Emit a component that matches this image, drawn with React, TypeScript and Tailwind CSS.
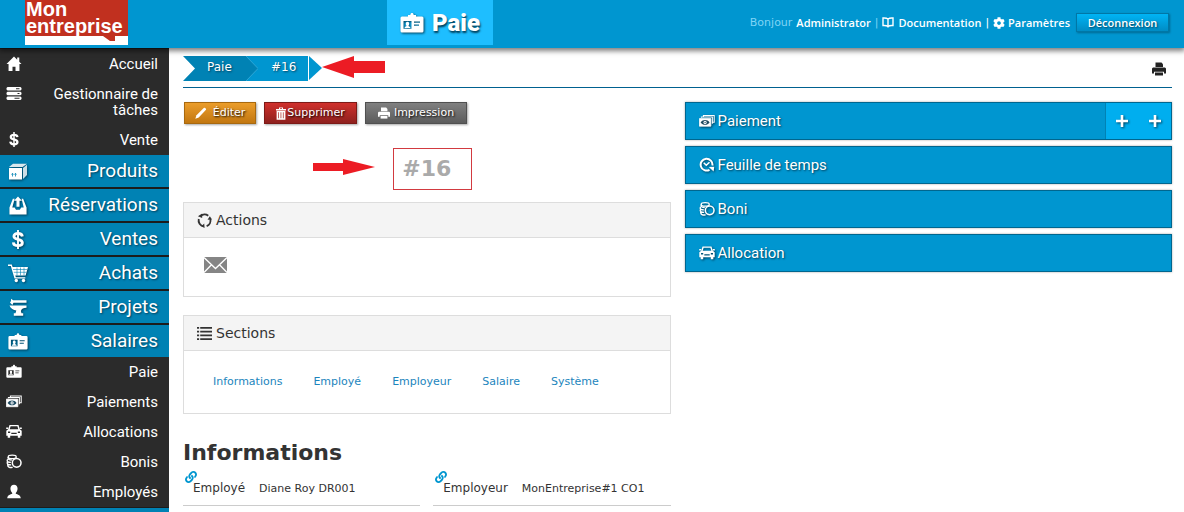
import React from 'react';
import { FaCog, FaLink } from 'react-icons/fa';

type IconProps = { className?: string };

function HomeIcon({ className }: IconProps) {
  return (
    <svg viewBox="0 0 16 16" className={className} fill="currentColor" aria-hidden="true">
      <path d="M8 0.500 0 8.600h2.200V16h4.200v-4.600h3.200V16h4.200V8.600H16l-2.400-2.500V1.500h-2.200v2.400z" />
    </svg>
  );
}

function ServerIcon({ className }: IconProps) {
  return (
    <svg viewBox="0 0 15 15" className={className} fill="currentColor" aria-hidden="true">
      <path fillRule="evenodd" d="M1 1h13l1 1v1.500l-1 1H1l-1-1V2zM9.500 2.300v1H13v-1zM1 5.700h13l1 1v1.500l-1 1H1l-1-1V6.700zM11 7v1h2V7zM1 10.400h13l1 1v1.500l-1 1H1l-1-1v-1.500zM8 11.700v1h5v-1z" />
    </svg>
  );
}

function DollarIcon({ className }: IconProps) {
  return (
    <svg viewBox="0 0 20 20" className={className} fill="none" stroke="currentColor" aria-hidden="true">
      <path d="M14.600 6.800C14.300 4.700 12.600 3.700 10 3.700c-2.700 0-4.300 1.100-4.300 2.900 0 2 1.700 2.600 4.300 3.200 2.900.7 4.600 1.400 4.600 3.500 0 1.900-1.800 3.100-4.600 3.100-2.900 0-4.700-1.200-4.900-3.500" strokeWidth="3" />
      <path d="M10 0v20" strokeWidth="2" />
    </svg>
  );
}

function CartIcon({ className }: IconProps) {
  return (
    <svg viewBox="0 0 20 18" className={className} fill="currentColor" aria-hidden="true">
      <path d="M0 0h3.800l.8 2.500H20L17.600 11H7.300l.5 1.700h9.500V14H6.500L2.800 1.500H0z" />
      <path d="M5 5h14M5.800 7.800h12.500M9 3v8M12.500 3v8M16 3v8" stroke="#0082b4" strokeWidth=".6" />
      <circle cx="8.300" cy="16" r="1.700" />
      <circle cx="15.500" cy="16" r="1.700" />
    </svg>
  );
}

function AnvilIcon({ className }: IconProps) {
  return (
    <svg viewBox="0 0 19 19" className={className} fill="currentColor" aria-hidden="true">
      <path d="M2.500 3V.8l2.200 1.400H18v2.600H5L3.800 7 1.500 4.500zM1 7.500h17v2.300c-3 0-5 1-5.600 3.200l.6 2.200h1.700v2.600H5.300v-2.600H7l.8-2.700C5 12.300 2 10.700 1 7.500z" />
    </svg>
  );
}

function CarIcon({ className }: IconProps) {
  return (
    <svg viewBox="0 0 16 14" className={className} fill="currentColor" aria-hidden="true">
      <path
        fillRule="evenodd"
        d="M3.500.5h9l1.300 4.300 1.900 1.400v5h-1.400v2h-2.500v-2H4.200v2H1.700v-2H.3v-5l1.900-1.400zM4.600 1.800l-.9 3h8.600l-.9-3zM2 7v1.400h2.200V7zm9.800 0v1.400H14V7zM5.300 8.300v1.300h5.400V8.300z"
      />
      <path d="M.2 3h2v1.400h-2zM13.800 3h2v1.400h-2z" />
    </svg>
  );
}

function PrinterIcon({ className }: IconProps) {
  return (
    <svg viewBox="0 0 14 14" className={className} fill="currentColor" aria-hidden="true">
      <path d="M3.500.5h6l1.500 1.700V5H3.500z" />
      <path fillRule="evenodd" d="M1 5.500h12l1 1v5h-2V9.700H2v1.800H0v-5z" />
      <path d="M3 10.500h8v3H3z" />
    </svg>
  );
}

function BoxIcon({ className }: IconProps) {
  return (
    <svg viewBox="0 0 20 18" className={className} fill="currentColor" aria-hidden="true">
      <path d="M1 5.500h13V17H1z" />
      <path d="m1 4.600 4-3.400h14l-4.400 3.400z" opacity=".85" />
      <path d="m15 5.600 4-3.400v10.200L15 16.400z" opacity=".8" />
      <path d="M4.500 14v-3m-1 1 1-1.200 1 1.200M7.500 14v-3m-1 1 1-1.200 1 1.200" stroke="#0082b4" fill="none" strokeWidth=".8" />
    </svg>
  );
}

function OutboxIcon({ className }: IconProps) {
  return (
    <svg viewBox="0 0 20 20" className={className} fill="currentColor" aria-hidden="true">
      <path d="M10 .5 5.800 5h2.600v6.400h3.200V5h2.600z" />
      <path d="M4.600 3 1 12v7.500h18V12l-3.600-9h-1.600l2.200 9h-2.600l-1.500 2.600h-4L6.500 12H4L6.500 3z" />
    </svg>
  );
}

function BadgeIcon({ className }: IconProps) {
  return (
    <svg viewBox="0 0 24 21" className={className} fill="currentColor" aria-hidden="true">
      <path
        fillRule="evenodd"
        d="M2 4h6V2.600h2.300C10.600 1 11 .5 12 .5s1.400.5 1.700 2.100H16V4h6a1.500 1.500 0 0 1 1.500 1.500v13A1.500 1.500 0 0 1 22 20H2a1.500 1.500 0 0 1-1.500-1.500v-13A1.500 1.500 0 0 1 2 4zm1.500 4.500v7.700h8V8.500zM14 9v1.300h6V9zm0 3v1.200h5V12z"
      />
      <path d="M4.500 15.500c.3-1.200 1.300-1.500 2.200-1.900-.6-.7-.9-1.500-.9-2.300 0-1.200.6-2 1.700-2s1.700.8 1.700 2c0 .8-.3 1.600-.9 2.300.9.4 1.900.7 2.200 1.900z" />
    </svg>
  );
}

function MoneyIcon({ className }: IconProps) {
  return (
    <svg viewBox="0 0 20 16" className={className} fill="none" stroke="currentColor" aria-hidden="true">
      <path d="M3 4V3h13.700v8.500M5.500 2.500V1h13.500v8.500h-2" strokeWidth="1.300" />
      <path d="M.5 5h14.300v9.500H.5z" fill="currentColor" />
      <path d="M2 9.800c1.500-2 3.300-3 5.600-3s4.100 1 5.600 3c-1.500 2-3.300 3-5.600 3s-4.100-1-5.600-3z" fill="#1f4a60" stroke="none" />
      <circle cx="7.600" cy="9.800" r="2" fill="currentColor" stroke="none" />
      <circle cx="7.600" cy="9.800" r=".8" fill="#1f4a60" stroke="none" />
    </svg>
  );
}

function CoinsIcon({ className }: IconProps) {
  return (
    <svg viewBox="0 0 18 16" className={className} fill="none" stroke="currentColor" strokeWidth="1.500" aria-hidden="true">
      <ellipse cx="7" cy="2.800" rx="4.500" ry="1.900" />
      <path d="M2.500 3c-.6 3 1.500 3.300 4 3.300M1.800 5.500C.3 8.500 3 9 5.500 9M1.600 8.600c-1 2.600 1.500 3.200 4.200 3.200M2 11.500c-.4 2.700 2 3.500 5.500 3.200" />
      <circle cx="12" cy="9.500" r="4.900" strokeWidth="1.700" />
    </svg>
  );
}

function PersonIcon({ className }: IconProps) {
  return (
    <svg viewBox="0 0 16 16" className={className} fill="currentColor" aria-hidden="true">
      <path d="M8 .8c2.300 0 3.800 1.600 3.800 4 0 2-.8 3.600-1.900 4.700v1c2 .8 5 1.300 5.300 4.700H.8c.3-3.400 3.300-3.900 5.300-4.700v-1C5 8.400 4.200 6.800 4.200 4.800c0-2.400 1.500-4 3.800-4z" />
    </svg>
  );
}

function BookIcon({ className }: IconProps) {
  return (
    <svg viewBox="0 0 12 11" className={className} fill="none" stroke="currentColor" strokeWidth="1.400" aria-hidden="true">
      <path d="M6 2C4.800 1 2.500.9 1 1v7.500c1.500-.1 3.800 0 5 1 1.200-1 3.500-1.100 5-1V1C9.500.9 7.200 1 6 2zM6 2v8.500" />
    </svg>
  );
}

function PencilIcon({ className }: IconProps) {
  return (
    <svg viewBox="0 0 12 12" className={className} fill="currentColor" aria-hidden="true">
      <path d="M.3 11.700 1.500 8.300 9 .8c.8-.6 2.500.9 2 1.900L3.700 10.400z" />
    </svg>
  );
}

function TrashIcon({ className }: IconProps) {
  return (
    <svg viewBox="0 0 10 13" className={className} fill="currentColor" aria-hidden="true">
      <path fillRule="evenodd" d="M0 2h3V.4h4V2h3v1.400H0zm4-.7V2h2v-.7zM.6 4h8.800v8.700H.6zM2.300 5.300v6h.7v-6zm2.300 0v6h.7v-6zm2.300 0v6h.7v-6z" />
    </svg>
  );
}

function CycleIcon({ className }: IconProps) {
  return (
    <svg viewBox="0 0 16 16" className={className} aria-hidden="true">
      <path d="M3.500 3.600A6.300 6.300 0 0 1 12 3M14.200 6.500A6.300 6.300 0 0 1 10.300 14M7 14.200A6.300 6.300 0 0 1 1.900 6.500" fill="none" stroke="currentColor" strokeWidth="2" />
      <path d="M5.600.5 5.500 5.300 1 3.400zM11.200 7.200 16 6.800l-2.300-3.300zM7.700 11.200l-3 3 3.400 1.800z" fill="currentColor" />
    </svg>
  );
}

function ListIcon({ className }: IconProps) {
  return (
    <svg viewBox="0 0 14 14" className={className} fill="currentColor" aria-hidden="true">
      <path d="M0 1h2v1.500H0zM3 1h11v1.500H3zM0 4.500h2V6H0zM3 4.500h11V6H3zM0 8h2v1.500H0zM3 8h11v1.500H3zM0 11.500h2V13H0zM3 11.500h11V13H3z" />
    </svg>
  );
}

function MailIcon({ className }: IconProps) {
  return (
    <svg viewBox="0 0 23 16" className={className} aria-hidden="true">
      <path d="M0 0h23v16H0z" fill="#858585" />
      <path d="m0 .5 11.500 11L23 .5M0 15.500l7.500-7.700M23 15.500l-7.500-7.700" stroke="#fff" strokeWidth="1.300" fill="none" />
    </svg>
  );
}

function ClockIcon({ className }: IconProps) {
  return (
    <svg viewBox="0 0 16 16" className={className} fill="none" stroke="currentColor" strokeWidth="2" aria-hidden="true">
      <path d="M10.500 12.800A5.900 5.900 0 1 1 13.400 8.500" />
      <path d="M4.700 5.800 7.300 8.200 10.500 5.300" strokeWidth="1.500" />
      <path d="m9.800 10 5.400-.3-.6 4.800z" fill="currentColor" stroke="none" />
    </svg>
  );
}

function PlusIcon({ className }: IconProps) {
  return (
    <svg viewBox="0 0 12 12" className={className} fill="currentColor" aria-hidden="true">
      <path d="M4.700 0h2.600v4.700H12v2.600H7.300V12H4.700V7.300H0V4.700h4.700z" />
    </svg>
  );
}

type Entry = { label: string; icon: React.ComponentType<IconProps> };

const shortcuts: Entry[] = [
  { label: 'Accueil', icon: HomeIcon },
  { label: 'Gestionnaire de tâches', icon: ServerIcon },
  { label: 'Vente', icon: DollarIcon },
];

const modules: Entry[] = [
  { label: 'Produits', icon: BoxIcon },
  { label: 'Réservations', icon: OutboxIcon },
  { label: 'Ventes', icon: DollarIcon },
  { label: 'Achats', icon: CartIcon },
  { label: 'Projets', icon: AnvilIcon },
  { label: 'Salaires', icon: BadgeIcon },
];

const payroll: Entry[] = [
  { label: 'Paie', icon: BadgeIcon },
  { label: 'Paiements', icon: MoneyIcon },
  { label: 'Allocations', icon: CarIcon },
  { label: 'Bonis', icon: CoinsIcon },
  { label: 'Employés', icon: PersonIcon },
];

const panels: Entry[] = [
  { label: 'Paiement', icon: MoneyIcon },
  { label: 'Feuille de temps', icon: ClockIcon },
  { label: 'Boni', icon: CoinsIcon },
  { label: 'Allocation', icon: CarIcon },
];

const sections = ['Informations', 'Employé', 'Employeur', 'Salaire', 'Système'];

const fields = [
  { label: 'Employé', value: 'Diane Roy DR001' },
  { label: 'Employeur', value: 'MonEntreprise#1 CO1' },
];

function SmallItem({ label, icon: Icon }: Entry) {
  return (
    <li>
      <a href="#" className="flex items-start justify-between py-[7px] pr-[11px] pl-[6px] text-[15px] leading-[16px] text-white">
        <Icon className="h-[15px] w-4 shrink-0" />
        <span className="w-[112px] text-right">{label}</span>
      </a>
    </li>
  );
}

function Sidebar() {
  return (
    <nav className="w-[169px] shrink-0 bg-[#2b2b2b] font-['Roboto',sans-serif]">
      <ul className="border-t border-[#1c1c1c]">
        {shortcuts.map((item) => (
          <SmallItem key={item.label} {...item} />
        ))}
      </ul>
      <ul className="divide-y-2 divide-[#1c1c1c]">
        {modules.map(({ label, icon: Icon }) => (
          <li key={label}>
            <a href="#" className="flex h-8 items-center justify-between bg-[#0082b4] pr-[11px] pl-2 text-[19px] text-white [text-shadow:1px_1px_2px_#00405c]">
              <Icon className="h-[19px] w-5 drop-shadow-[1px_1px_1px_#00405c]" />
              {label}
            </a>
          </li>
        ))}
      </ul>
      <ul>
        {payroll.map((item) => (
          <SmallItem key={item.label} {...item} />
        ))}
      </ul>
      <div className="h-8 border-t border-[#1c1c1c] bg-[#0082b4]" />
    </nav>
  );
}

function Header() {
  return (
    <header className="relative z-10 flex h-12 shrink-0 items-start bg-[#0096d0] pr-[15px] shadow-[0_2px_5px_1px_rgba(0,0,0,0.5)]">
      <a href="#" className="ml-[25px] h-[45px] w-[103px] bg-white font-['Liberation_Sans',sans-serif] text-[20px] leading-[17px] font-bold text-white">
        <span className="block h-9 bg-[#c1301f] pt-px pl-px">
          Mon
          <br />
          entreprise
        </span>
        <svg viewBox="0 0 26 6" className="ml-[76px] h-[6px] w-[26px]" aria-hidden="true">
          <path d="M2 0h12v5H9z" fill="#c1301f" />
        </svg>
      </a>
      <h1 className="ml-[259px] flex h-[45px] w-[106px] items-center justify-center gap-2 bg-[#1ebeff] font-['Roboto',sans-serif] text-[24px] font-black text-white [text-shadow:1px_2px_2px_#00405c]">
        <BadgeIcon className="h-[22px] w-6 drop-shadow-[1px_1px_1px_#00405c]" />
        Paie
      </h1>
      <div className="ml-auto flex items-center gap-1 pt-[13px] text-[11px] leading-[19px] whitespace-nowrap text-white">
        <span className="text-[#7fd4f5]">Bonjour</span>
        <a href="#" className="font-['Open_Sans',sans-serif] font-semibold">Administrator</a>
        <span className="text-[#7fd4f5]">|</span>
        <a href="#" className="flex items-center gap-1 font-['Open_Sans',sans-serif] font-semibold">
          <BookIcon className="h-[11px] w-3" />
          Documentation
        </a>
        <span>|</span>
        <a href="#" className="flex items-center gap-[3px] font-['Open_Sans',sans-serif] font-semibold">
          <FaCog className="h-3 w-3" />
          Paramètres
        </a>
        <button type="button" className="ml-[2px] h-[19px] w-[93px] border border-[#0077a6] bg-linear-to-b from-[#00b4f5] to-[#008cc4] font-['Open_Sans',sans-serif] text-[11px] leading-[17px] font-semibold shadow-[1px_1px_2px_rgba(0,0,0,0.3)] [text-shadow:1px_1px_2px_#00405c]">
          Déconnexion
        </button>
      </div>
    </header>
  );
}

function Breadcrumb() {
  return (
    <div className="flex h-10 items-start justify-between border-b border-[#006190] pt-2">
      <div className="flex items-start">
        <nav aria-label="Fil d'Ariane" className="flex h-[25px] text-[12px] leading-[22px] text-white [text-shadow:1px_1px_2px_#00405c]">
          <a href="#" className="w-[63px] bg-[#0082b4] pl-6 [clip-path:polygon(0_0,100%_0,100%_100%,0_100%,12px_50%)]">
            Paie
          </a>
          <a href="#" className="relative w-[62px] bg-[#0096d0] pl-[25px]">
            <svg viewBox="0 0 12 25" className="absolute top-0 left-0 h-[25px] w-3" aria-hidden="true">
              <path d="M0 0 12 12.500 0 25z" fill="#0082b4" />
              <path d="M0 0 12 12.500 0 25" fill="none" stroke="#3fb2de" strokeWidth=".7" />
            </svg>
            #16
          </a>
          <svg viewBox="0 0 13 25" className="ml-px h-[25px] w-[13px]" aria-hidden="true">
            <path d="M0 0 13 12 0 24z" fill="#0096d0" />
          </svg>
        </nav>
        <svg viewBox="0 0 64 22" className="h-[22px] w-16" aria-hidden="true">
          <path d="M0 11 32 0v5h31v12H32v5z" fill="#ec1c24" />
        </svg>
      </div>
      <button type="button" aria-label="Imprimer" className="mt-[6px] mr-[6px] text-[#222]">
        <PrinterIcon className="h-[14px] w-[14px]" />
      </button>
    </div>
  );
}

function ActionButton({ tone, children }: { tone: string; children: React.ReactNode }) {
  return (
    <button type="button" className={`flex h-[22px] items-center justify-center border text-[11px] text-white shadow-[1px_1px_2px_rgba(0,0,0,0.35)] [text-shadow:1px_1px_2px_#000] ${tone}`}>
      {children}
    </button>
  );
}

function Card({ title, icon: Icon, children }: { title: string; icon: React.ComponentType<IconProps>; children: React.ReactNode }) {
  return (
    <section className="border border-[#ddd]">
      <h2 className="flex h-[35px] items-center gap-1 border-b border-[#ddd] bg-[#f4f4f4] px-[13px] text-[14px] text-[#333]">
        <Icon className="h-[15px] w-[15px]" />
        {title}
      </h2>
      {children}
    </section>
  );
}

export default function App() {
  return (
    <div className="flex h-screen flex-col overflow-hidden bg-white font-['DejaVu_Sans',sans-serif] text-[#333]">
      <Header />
      <div className="flex min-h-0 flex-1">
        <Sidebar />
        <main className="min-w-0 flex-1 pr-3 pl-[14px]">
          <Breadcrumb />
          <div className="grid grid-cols-2 gap-[14px] pt-[14px]">
            <div>
              <div className="flex gap-2 pl-px">
                <ActionButton tone="w-[72px] gap-[6px] border-[#a8690f] bg-linear-to-b from-[#eb9d2a] to-[#c27710]">
                  <PencilIcon className="h-3 w-3" />
                  Éditer
                </ActionButton>
                <ActionButton tone="w-[93px] gap-px border-[#7d1a17] bg-linear-to-b from-[#d0302c] to-[#8f211e]">
                  <TrashIcon className="h-[13px] w-[10px]" />
                  Supprimer
                </ActionButton>
                <ActionButton tone="w-[102px] gap-1 border-[#505050] bg-linear-to-b from-[#808080] to-[#5c5c5c]">
                  <PrinterIcon className="h-3 w-3" />
                  Impression
                </ActionButton>
              </div>
              <div className="flex items-center justify-center pt-6 pb-3">
                <div className="relative">
                  <h2 className="py-[6px] text-[22px] leading-[30px] font-bold text-[#aaa]">#16</h2>
                  <div className="absolute inset-y-0 -left-[9px] w-[79px] border border-[#d23a40]" />
                  <svg viewBox="0 0 62 16" className="absolute top-[11px] right-[76px] h-4 w-[62px]" aria-hidden="true">
                    <path d="M0 4h30V0l32 8-32 8v-4H0z" fill="#ec1c24" />
                  </svg>
                </div>
              </div>
              <div className="flex flex-col gap-[18px]">
                <Card title="Actions" icon={CycleIcon}>
                  <div className="h-[58px] px-5 pt-[19px]">
                    <button type="button" aria-label="Envoyer par courriel" className="block">
                      <MailIcon className="h-4 w-[23px]" />
                    </button>
                  </div>
                </Card>
                <Card title="Sections" icon={ListIcon}>
                  <nav className="flex h-[62px] items-center gap-[31px] px-[29px] pt-px text-[11px] text-[#1c85bd]">
                    {sections.map((name) => (
                      <a key={name} href="#">
                        {name}
                      </a>
                    ))}
                  </nav>
                </Card>
              </div>
              <h2 className="mt-6 text-[22px] leading-[30px] font-bold">Informations</h2>
              <dl className="grid grid-cols-2 gap-[13px]">
                {fields.map(({ label, value }) => (
                  <div key={label} className="flex h-[38px] items-start border-b border-[#ccc] pt-[3px]">
                    <dt className="flex text-[12px]">
                      <FaLink className="ml-[2px] h-3 w-3 text-[#0096d0]" />
                      <span className="-ml-1 pt-[8px] leading-[18px]">{label}</span>
                    </dt>
                    <dd className="ml-[14px] pt-[9px] text-[11px] leading-[18px]">{value}</dd>
                  </div>
                ))}
              </dl>
            </div>
            <div className="flex flex-col gap-[6px]">
              {panels.map(({ label, icon: Icon }, index) => (
                <div key={label} className="flex h-[38px] border border-[#00668f] bg-[#0096d0] font-['Roboto',sans-serif] text-[15px] text-white shadow-[0_0_2px_rgba(0,0,0,0.35)] [text-shadow:1px_1px_2px_#00405c]">
                  <a href="#" className="flex flex-1 items-center gap-[3px] pl-[13px]">
                    <Icon className="h-4 w-4 drop-shadow-[1px_1px_1px_#00405c]" />
                    {label}
                  </a>
                  {index === 0 && (
                    <div className="flex w-[66px] items-center justify-around border-l border-[#0082b4] bg-[#00aeef]">
                      <button type="button" aria-label="Ajouter un paiement">
                        <PlusIcon className="h-3 w-3 drop-shadow-[1px_1px_1px_#00405c]" />
                      </button>
                      <button type="button" aria-label="Ajouter plusieurs paiements">
                        <PlusIcon className="h-3 w-3 drop-shadow-[1px_1px_1px_#00405c]" />
                      </button>
                    </div>
                  )}
                </div>
              ))}
            </div>
          </div>
        </main>
      </div>
    </div>
  );
}
